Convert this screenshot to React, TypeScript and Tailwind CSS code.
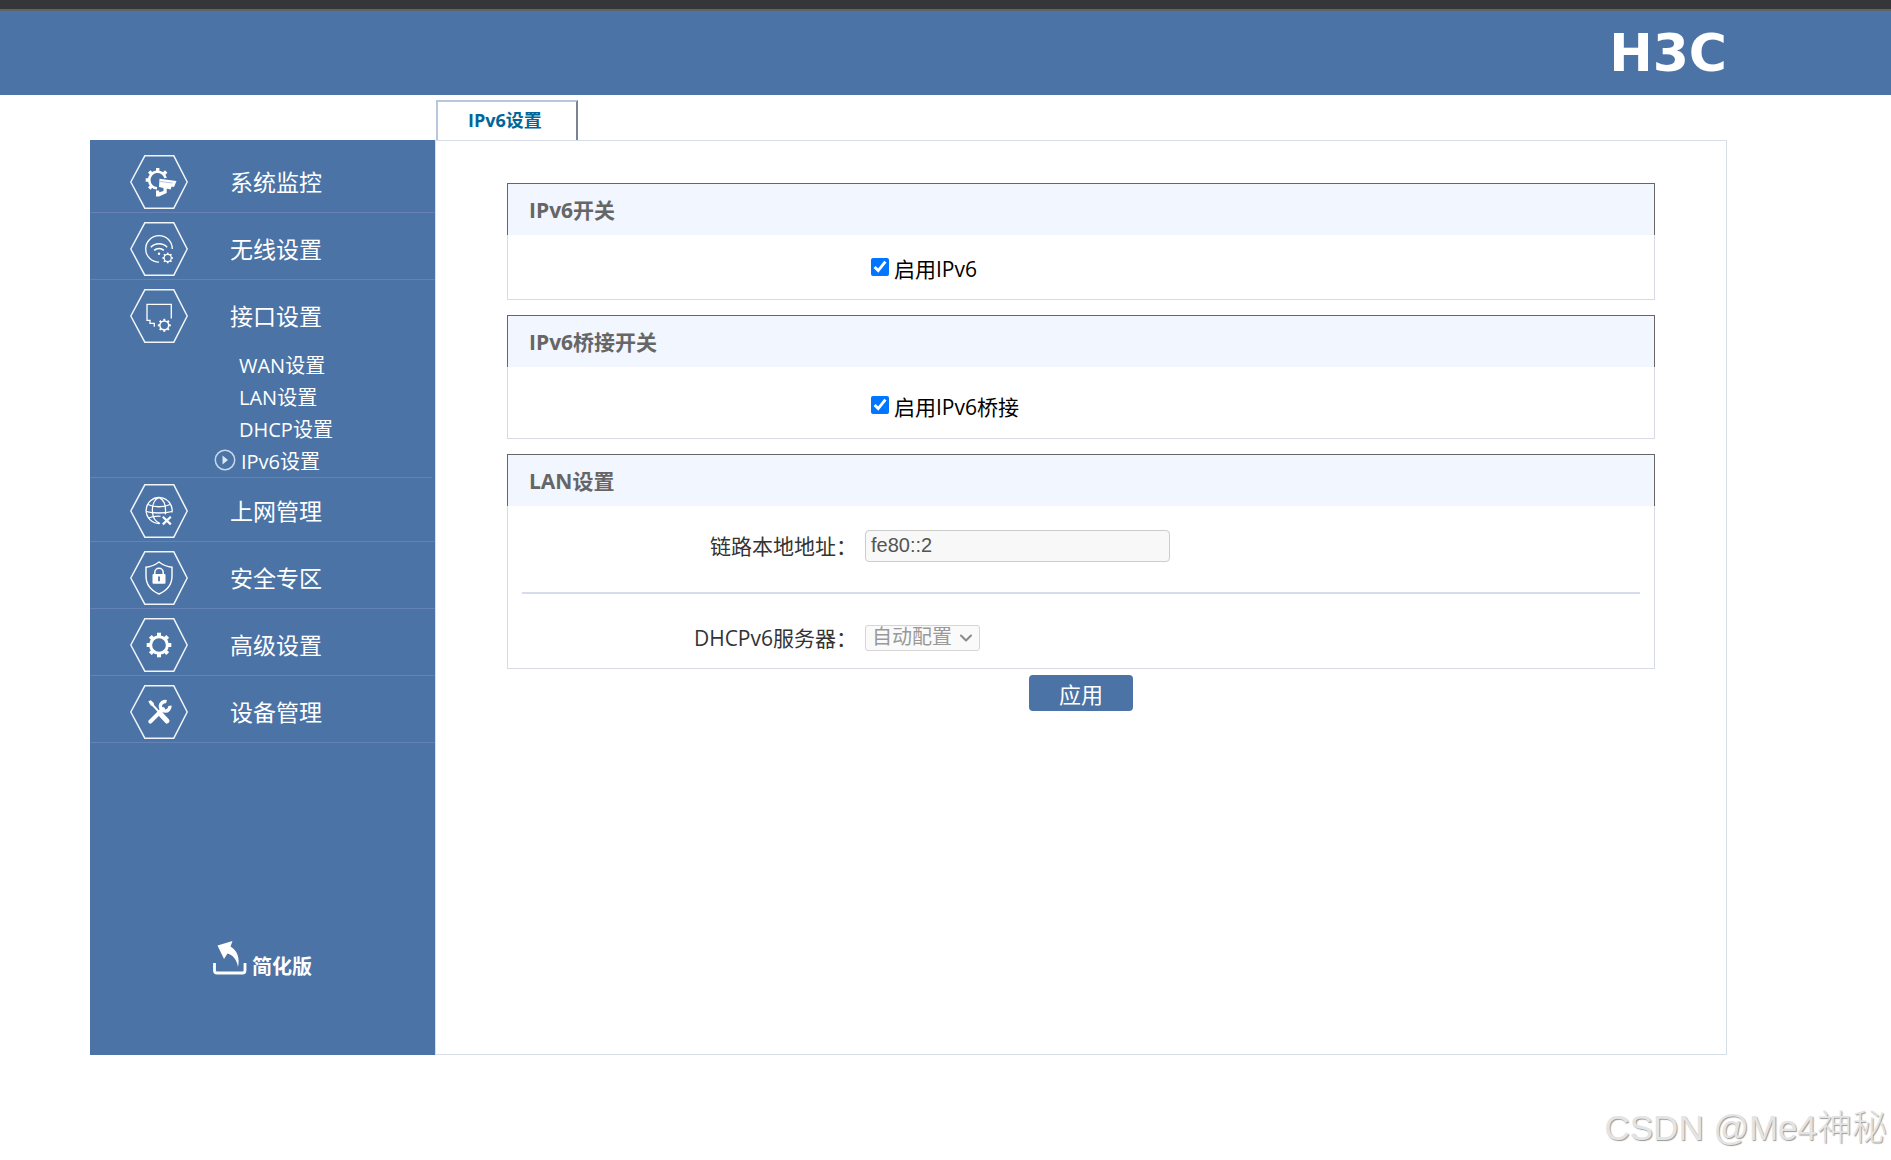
import { useState } from 'react';
import type { ReactNode } from 'react';
import clsx from 'clsx';
import { ChevronDown } from 'lucide-react';

interface GearProps {
  cx: number;
  cy: number;
  r: number;
  ring: number;
  tooth: number;
}

// Ring with eight teeth, r is the outer radius including the teeth
function Gear({ cx, cy, r, ring, tooth }: GearProps) {
  const inner = r * 0.68;
  return (
    <g>
      <circle cx={cx} cy={cy} r={inner} strokeWidth={ring} />
      {[0, 45, 90, 135, 180, 225, 270, 315].map((angle) => (
        <path
          key={angle}
          d={`M${cx} ${cy - inner}V${cy - r}`}
          strokeWidth={tooth}
          transform={`rotate(${angle} ${cx} ${cy})`}
        />
      ))}
    </g>
  );
}

function HexIcon({ children }: { children: ReactNode }) {
  return (
    <svg viewBox="0 0 58 54" className="h-[54px] w-[58px] shrink-0" fill="none" stroke="#fff" aria-hidden="true">
      <path d="M.8 27 14.8.8H43.8L57.2 27 43.8 53.2H14.8Z" stroke="#f1f4f9" strokeWidth="1.5" />
      {children}
    </svg>
  );
}

const monitorIcon = (
  <>
    <path d="M27 33.3A8.3 8.3 0 1 1 35.6 23" strokeWidth="2.6" />
    <path d="M27.7 17v-4M22 19.3l-2.8-2.8M33.4 19.3l2.8-2.8M19.7 25h-4M22 30.7l-2.8 2.8" strokeWidth="3.4" />
    <path d="M29.5 23.8 46.5 26 44 32 41.7 31.4 40.6 34.5 29 32Z" fill="#fff" stroke="none" />
    <path d="M30 26.5 42.5 28" stroke="#4b73a6" strokeWidth=".4" />
    <path d="M26 35.5h3.2v1.7l4.3-1.3v-3.6h3.2v5.6L29 41.6h-3Z" fill="#fff" stroke="none" />
  </>
);

const wifiIcon = (
  <>
    <path d="M42.3 27A13.3 13.3 0 1 0 29 40.2" strokeWidth="1.3" />
    <path d="M20.8 25.2A11.4 11.4 0 0 1 37.2 25.2" strokeWidth="1.5" />
    <path d="M24.2 28.4A6.8 6.8 0 0 1 33.8 28.4" strokeWidth="1.5" />
    <circle cx="29" cy="31.8" r="1.2" fill="#fff" stroke="none" />
    <Gear cx={37.7} cy={36} r={5.3} ring={1.2} tooth={1.7} />
  </>
);

const portIcon = (
  <>
    <path d="M41.3 29.5V15.3H17v16h3v3h4.3v3.5" strokeWidth="1.3" />
    <Gear cx={34.3} cy={36.3} r={6.5} ring={1.5} tooth={2} />
  </>
);

const globeIcon = (
  <>
    <path d="M29.5 39.5A13 13 0 1 1 42 28.5" strokeWidth="1.3" />
    <path d="M30 39.5C20 36 20 17 29 13.4M29 13.4c6 3 7 11 6.3 17" strokeWidth="1.3" />
    <path d="M18 20.5c6 3 16 3 22 0M16 27.5c7 2 19 2 26 0M18.5 34c4-1.6 8-2 12-1.7" strokeWidth="1.3" />
    <path d="m32.8 32.8 8 7.6M40.8 32.8l-8 7.6" strokeWidth="2.2" />
  </>
);

const shieldIcon = (
  <>
    <path d="M29 11c-4 3-8 4.6-13 5.2V25c0 8 5 14.5 13 18 8-3.5 13-10 13-18v-8.8C37 15.6 33 14 29 11Z" strokeWidth="1.4" />
    <path d="M24.8 23.5v-2a4.2 4.2 0 0 1 8.4 0v2" strokeWidth="1.5" />
    <rect x="22.5" y="23" width="13" height="9.8" rx="1" fill="#fff" stroke="none" />
    <path d="M29 25.5v4.8" stroke="#4b73a6" strokeWidth="1.8" />
  </>
);

const advancedIcon = <Gear cx={29} cy={27} r={12.3} ring={3} tooth={4} />;

const toolsIcon = (
  <>
    <path d="m20 17 9.5 10.5" strokeWidth="2" />
    <path d="m18.3 16.2 2.6-1 2.8 2.8.5 3.5-3.4-1Z" fill="#fff" stroke="none" />
    <path d="m31 29.5 6 6.5" strokeWidth="5" strokeLinecap="round" />
    <path d="M20.3 36.7 33 24" strokeWidth="4" strokeLinecap="round" />
    <path d="M36.5 16.7a4.8 4.8 0 1 0 3.4 4" strokeWidth="3.4" />
  </>
);

const subItems = ['WAN设置', 'LAN设置', 'DHCP设置', 'IPv6设置'];

const menuTop = [
  { label: '系统监控', icon: monitorIcon },
  { label: '无线设置', icon: wifiIcon },
];

const menuBottom = [
  { label: '上网管理', icon: globeIcon },
  { label: '安全专区', icon: shieldIcon },
  { label: '高级设置', icon: advancedIcon },
  { label: '设备管理', icon: toolsIcon },
];

interface MenuItemProps {
  label: string;
  icon: ReactNode;
  className?: string;
}

function MenuItem({ label, icon, className }: MenuItemProps) {
  return (
    <a href="#" className={clsx('flex items-center pb-[3px] pl-10 text-[23px] leading-8', className)}>
      <HexIcon>{icon}</HexIcon>
      <span className="ml-[42px]">{label}</span>
    </a>
  );
}

function Sidebar() {
  return (
    <nav className="flex w-[345px] shrink-0 flex-col bg-[#4b73a6] pt-[6px] text-white">
      {menuTop.map((item) => (
        <MenuItem key={item.label} {...item} className="border-b border-[#6681b8] pt-[9px]" />
      ))}
      <MenuItem label="接口设置" icon={portIcon} className="pt-[9px]" />
      <ul className="mr-[3px] h-[132px] border-b border-[#6681b8] pt-1 text-[20px] leading-8">
        {subItems.map((label) => {
          const active = label === 'IPv6设置';
          return (
            <li key={label}>
              <a href="#" className={clsx('flex items-center', active ? 'pl-[124px]' : 'pl-[149px]')}>
                {active && (
                  <svg viewBox="0 0 22 22" className="mr-[5px] mb-1 size-[22px]" aria-hidden="true">
                    <circle cx="11" cy="11" r="9.7" fill="none" stroke="#c6d8ee" strokeWidth="1.5" />
                    <path d="M8.5 6.5 14 11l-5.5 4.5Z" fill="#dce8f6" />
                  </svg>
                )}
                {label}
              </a>
            </li>
          );
        })}
      </ul>
      {menuBottom.map((item, index) => (
        <MenuItem
          key={item.label}
          {...item}
          className={clsx('border-b border-[#6681b8]', index === 0 ? 'pt-[6px]' : 'pt-[9px]')}
        />
      ))}
      <a href="#" className="mt-auto mb-[72px] ml-[123px] flex items-end self-start text-[20px] font-bold leading-8">
        <svg viewBox="0 0 34 34" className="mr-[5px] mb-2 size-[34px]" aria-hidden="true">
          <path d="M1.5 22v7.5q0 2.5 2.5 2.5h25.5q2.5 0 2.5-2.5V22" fill="none" stroke="#fff" strokeWidth="2.8" />
          <path d="M4.5 4.5 19.5 0l-2 5.5C24.5 10 27 17 25 26c-1-7-5-12-10.5-13.5L11 18Z" fill="#fff" />
        </svg>
        简化版
      </a>
    </nav>
  );
}

function Card({ title, children }: { title: string; children: ReactNode }) {
  return (
    <section>
      <h2 className="border-x border-t border-[#666] bg-[#f2f6ff] pt-[1px] pl-[21px] text-[21px] font-bold leading-[50px] text-[#666]">
        {title}
      </h2>
      <div className="border-x border-b border-[#d9dae8]">{children}</div>
    </section>
  );
}

interface CheckFieldProps {
  label: string;
  checked: boolean;
  onChange: (checked: boolean) => void;
}

function CheckField({ label, checked, onChange }: CheckFieldProps) {
  return (
    <label className="ml-[363px] flex items-center gap-[5px] text-[21px] leading-8 text-black">
      <input
        type="checkbox"
        checked={checked}
        onChange={(e) => onChange(e.target.checked)}
        className="mb-1 size-[18px]"
      />
      {label}
    </label>
  );
}

export default function App() {
  const [ipv6, setIpv6] = useState(true);
  const [bridge, setBridge] = useState(true);

  return (
    <div className="bg-white font-['Open_Sans','Noto_Sans_CJK_SC',sans-serif]">
      <div className="h-[11px] border-b-2 border-[#626468] bg-[#353639]" />
      <header className="flex h-[84px] items-center justify-end bg-[#4b73a6] pr-[164px]">
        <h1 className="font-['DejaVu_Sans',sans-serif] text-[52px] font-bold leading-none text-white">H3C</h1>
      </header>

      <div className="mr-[164px] ml-[90px] pt-[5px]">
        <div className="ml-[346px] flex">
          <a
            href="#"
            className="border-2 border-b-0 border-[#b9c6df] border-r-[#7b8393] pr-[34px] pb-[2px] pl-[30px] text-[18px] font-bold leading-9 text-[#069]"
          >
            IPv6设置
          </a>
        </div>

        <div className="flex min-h-[915px]">
          <Sidebar />
          <main className="flex-1 border border-[#d7dee8] px-[71px] pt-[42px]">
            <div className="flex flex-col gap-[15px]">
              <Card title="IPv6开关">
                <div className="pt-[18px] pb-[14px]">
                  <CheckField label="启用IPv6" checked={ipv6} onChange={setIpv6} />
                </div>
              </Card>

              <Card title="IPv6桥接开关">
                <div className="pt-[24px] pb-[15px]">
                  <CheckField label="启用IPv6桥接" checked={bridge} onChange={setBridge} />
                </div>
              </Card>

              <Card title="LAN设置">
                <div className="flex items-center pt-6 text-[21px] leading-8 text-[#333]">
                  <label htmlFor="link-local" className="w-[349px] text-right">
                    链路本地地址：
                  </label>
                  <input
                    id="link-local"
                    type="text"
                    defaultValue="fe80::2"
                    disabled
                    className="ml-2 h-8 w-[305px] rounded-[4px] border border-[#ccc] bg-[#f8f8f8] px-[5px] pb-[2px] font-['Liberation_Sans',sans-serif] text-[20px] text-[#545454]"
                  />
                </div>
                <hr className="mx-[14px] mt-[30px] border-t-2 border-[#d5ddea]" />
                <div className="flex items-center pt-[28px] pb-[14px] text-[21px] leading-8 text-[#333]">
                  <label htmlFor="dhcpv6" className="w-[349px] text-right">
                    DHCPv6服务器：
                  </label>
                  <div className="relative ml-2 flex">
                    <select
                      id="dhcpv6"
                      disabled
                      className="h-[26px] w-[115px] appearance-none rounded-[3px] border border-[#d5d5d5] bg-[#fafafa] pb-[2px] pl-[6px] text-[20px] leading-[22px] text-[#999] opacity-100"
                    >
                      <option>自动配置</option>
                    </select>
                    <ChevronDown
                      size={20}
                      strokeWidth={2.5}
                      className="pointer-events-none absolute top-[3px] right-1 text-[#8c8c8c]"
                    />
                  </div>
                </div>
              </Card>
            </div>
            <div className="flex justify-center pt-[6px]">
              <button type="button" className="h-9 w-[104px] rounded-[4px] bg-[#4b73a6] pt-[2px] text-[22px] leading-8 text-white">
                应用
              </button>
            </div>
          </main>
        </div>
      </div>

      <footer className="pt-[49px] pr-1 text-right font-['Liberation_Sans','Noto_Sans_CJK_SC',sans-serif] text-[35px] font-light leading-[48px] text-[#e4e4e4] [text-shadow:1px_1px_1px_#999]">
        CSDN @Me4神秘
      </footer>
    </div>
  );
}
